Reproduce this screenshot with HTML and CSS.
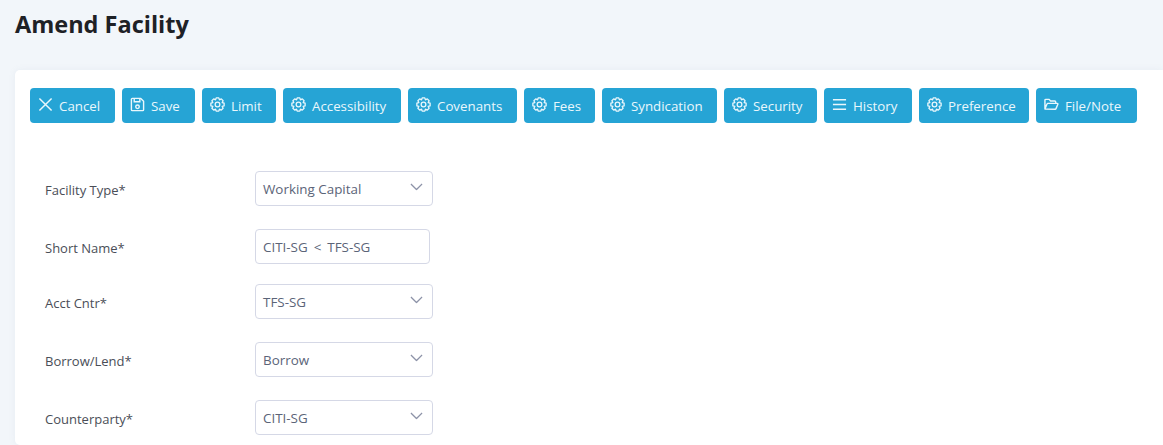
FILE: index.html
```html
<!DOCTYPE html>
<html lang="en">
<head>
<meta charset="utf-8">
<title>Amend Facility</title>
<link rel="stylesheet" href="styles.css">
</head>
<body>
<svg class="defs" width="0" height="0" aria-hidden="true">
  <symbol id="gear" viewBox="0 0 16 16">
    <polygon fill="none" stroke="currentColor" stroke-width="1.4" stroke-linejoin="round" points="9.37,.93 10.07,3.01 12.03,2.03 13.97,3.97 12.99,5.93 15.07,6.63 15.07,9.37 12.99,10.07 13.97,12.03 12.03,13.97 10.07,12.99 9.37,15.07 6.63,15.07 5.93,12.99 3.97,13.97 2.03,12.03 3.01,10.07 .93,9.37 .93,6.63 3.01,5.93 2.03,3.97 3.97,2.03 5.93,3.01 6.63,.93"/>
    <circle cx="8" cy="8" r="2.5" fill="none" stroke="currentColor" stroke-width="1.4"/>
  </symbol>
  <symbol id="chev" viewBox="0 0 14 8">
    <path fill="none" stroke="currentColor" stroke-width="1.3" d="M1 1l6 6 6-6"/>
  </symbol>
</svg>
<h1 class="title">Amend Facility</h1>
<main class="card">
  <div class="toolbar">
    <button class="btn b-cancel"><svg class="ico" viewBox="0 0 16 16"><path fill="none" stroke="currentColor" stroke-width="1.6" d="M1.5 1.5l13 13M14.5 1.5l-13 13"/></svg>Cancel</button>
    <button class="btn b-save"><svg class="ico" viewBox="0 0 16 16"><path fill="none" stroke="currentColor" stroke-width="1.5" stroke-linejoin="round" d="M2.5 1.5h9l3 3v9a1 1 0 0 1-1 1h-11a1 1 0 0 1-1-1v-11a1 1 0 0 1 1-1z"/><path fill="none" stroke="currentColor" stroke-width="1.5" d="M4.5 1.5v3.5h6v-3.5"/><circle cx="8" cy="10.5" r="1.9" fill="none" stroke="currentColor" stroke-width="1.5"/></svg>Save</button>
    <button class="btn b-limit"><svg class="ico"><use href="#gear"/></svg>Limit</button>
    <button class="btn b-access"><svg class="ico"><use href="#gear"/></svg>Accessibility</button>
    <button class="btn b-cov"><svg class="ico"><use href="#gear"/></svg>Covenants</button>
    <button class="btn b-fees"><svg class="ico"><use href="#gear"/></svg>Fees</button>
    <button class="btn b-syn"><svg class="ico"><use href="#gear"/></svg>Syndication</button>
    <button class="btn b-sec"><svg class="ico"><use href="#gear"/></svg>Security</button>
    <button class="btn b-his"><svg class="ico" viewBox="0 0 16 16"><path fill="none" stroke="currentColor" stroke-width="1.7" d="M1 3h14M1 8h14M1 13h14"/></svg>History</button>
    <button class="btn b-pref"><svg class="ico"><use href="#gear"/></svg>Preference</button>
    <button class="btn b-file"><svg class="ico" viewBox="0 0 16 16"><path fill="none" stroke="currentColor" stroke-width="1.5" stroke-linejoin="round" d="M1 12.5v-9a1 1 0 0 1 1-1h3.5l1.5 1.7h4.5a1 1 0 0 1 1 1v1.3M1 12.8l2.2-5.3a1 1 0 0 1 1-.7h9.9a.7.7 0 0 1 .7 1l-2 4.6a1 1 0 0 1-1 .6z"/></svg>File/Note</button>
  </div>
  <form class="form">
    <div class="row">
      <label class="lbl">Facility Type*</label>
      <div class="field select"><span>Working Capital</span><svg class="chev"><use href="#chev"/></svg></div>
    </div>
    <div class="row">
      <label class="lbl">Short Name*</label>
      <div class="field input"><span>CITI-SG &lt; TFS-SG</span></div>
    </div>
    <div class="row">
      <label class="lbl">Acct Cntr*</label>
      <div class="field select"><span>TFS-SG</span><svg class="chev"><use href="#chev"/></svg></div>
    </div>
    <div class="row">
      <label class="lbl">Borrow/Lend*</label>
      <div class="field select"><span>Borrow</span><svg class="chev"><use href="#chev"/></svg></div>
    </div>
    <div class="row">
      <label class="lbl">Counterparty*</label>
      <div class="field select"><span>CITI-SG</span><svg class="chev"><use href="#chev"/></svg></div>
    </div>
  </form>
</main>
</body>
</html>
```
FILE: styles.css
```css
* { box-sizing: border-box; }
html, body { height: 100%; }
body {
  margin: 0;
  height: 445px;
  overflow: hidden;
  background: #f2f6fa;
  font-family: "Open Sans", "Noto Sans", sans-serif;
  color: #3a3f4a;
  padding: 0 0 0 15px;
}
.defs { position: absolute; }
.title {
  margin: 0;
  height: 70px;
  padding-top: 7px;
  font-size: 23.5px;
  line-height: 34px;
  font-weight: 700;
  color: #1e2126;
}
.card {
  background: #fff;
  border-radius: 5px 0 0 5px;
  height: 375px;
  padding: 18px 15px 0;
  box-shadow: 0 0 6px rgba(160, 175, 190, .12);
}
.toolbar { display: flex; gap: 7px; }
.btn {
  height: 35px;
  display: flex;
  align-items: center;
  gap: 6px;
  padding: 2px 0 0 8px;
  border: 0;
  border-radius: 4px;
  background: #26a4d5;
  color: #eaf7fc;
  font: 400 13.3px/1 "Open Sans", "Noto Sans", sans-serif;
}
.ico { width: 15px; height: 15px; flex: none; margin-top: -4px; }
.b-cancel { width: 85px; }
.b-save { width: 73px; }
.b-limit { width: 74px; }
.b-access { width: 118px; }
.b-cov { width: 109px; }
.b-fees { width: 71px; }
.b-syn { width: 115px; }
.b-sec { width: 93px; }
.b-his { width: 88px; }
.b-pref { width: 110px; }
.b-file { width: 101px; }
.form { padding: 48px 0 0 15px; }
.row {
  display: grid;
  grid-template-columns: 210px auto;
  justify-content: start;
  align-items: center;
  height: 35px;
  margin-bottom: 23px;
}
.row:nth-child(2) { margin-bottom: 20px; }
.lbl { font-size: 13px; color: #4a4e57; padding-top: 3px; }
.field {
  height: 35px;
  border: 1px solid #d5d8e6;
  border-radius: 4px;
  background: #fff;
  display: flex;
  align-items: center;
  justify-content: space-between;
  padding: 0 8px 0 7px;
  font-size: 13.4px;
  color: #5b6478;
}
.input { width: 175px; word-spacing: 2.5px; }
.select { width: 178px; }
.chev { width: 13px; height: 7.5px; color: #8d93a8; margin-top: -3px; margin-right: 1px; }
```
